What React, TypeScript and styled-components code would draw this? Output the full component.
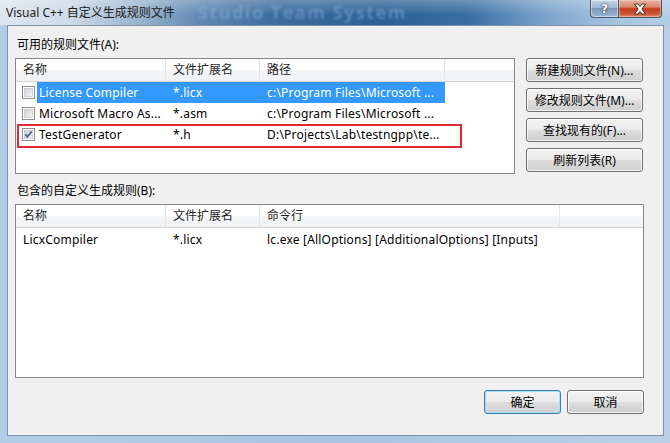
import React from "react";
import styled, { createGlobalStyle } from "styled-components";

const GlobalStyle = createGlobalStyle`
  html, body { margin: 0; padding: 0; }
  body {
    width: 670px;
    height: 443px;
    overflow: hidden;
    font-family: "Noto Sans", "Noto Sans CJK SC", sans-serif;
    font-size: 12px;
    color: #000;
  }
  * { box-sizing: border-box; }
`;

const Window = styled.div`
  width: 670px;
  height: 443px;
  display: flex;
  flex-direction: column;
  background: linear-gradient(90deg, #b4cde6 0%, #a9c5e2 50%, #b9d0e7 100%);
  overflow: hidden;
`;

const TitleBar = styled.div`
  position: relative;
  height: 25px;
  flex: none;
  display: flex;
  align-items: flex-start;
  background:
    linear-gradient(180deg, rgba(255, 255, 255, 0.25) 0%, rgba(255, 255, 255, 0) 60%),
    linear-gradient(90deg, #dde6ef 0%, #cfdbe7 10%, #9db7d0 20%, #5f88b2 30%, #3a6b9c 42%, #2c6196 58%, #3a6fa3 70%, #7ea6cc 82%, #a7c4e0 92%, #b3cde6 100%);
  overflow: hidden;
`;

const Watermark = styled.div`
  position: absolute;
  left: 198px;
  top: 2px;
  height: 21px;
  font-family: "Open Sans", "Noto Sans", sans-serif;
  font-weight: 700;
  font-size: 18px;
  line-height: 21px;
  letter-spacing: 1.5px;
  color: rgba(150, 190, 230, 0.4);
  filter: blur(0.8px);
  white-space: nowrap;
  pointer-events: none;
`;

const Title = styled.div`
  position: relative;
  padding-left: 6px;
  line-height: 25px;
  font-size: 12px;
  color: #1b1b1b;
  white-space: nowrap;
`;

const CaptionButtons = styled.div`
  position: relative;
  margin-left: auto;
  margin-right: 8px;
  display: flex;
`;

const HelpButton = styled.div`
  width: 28px;
  height: 18px;
  border: 1px solid #45566b;
  border-top: none;
  border-right: none;
  border-radius: 0 0 0 4px;
  background: linear-gradient(180deg, #c3d5e7 0%, #9fb8d2 45%, #7b98b8 50%, #9ab7d5 100%);
  box-shadow: inset 0 0 0 1px rgba(255, 255, 255, 0.45);
  display: flex;
  align-items: center;
  justify-content: center;
  font-family: "DejaVu Sans", sans-serif;
  font-weight: 700;
  font-size: 12px;
  line-height: 16px;
  color: #fff;
  text-shadow: 0 0 1px #24364f, 0 0 2px #24364f;
`;

const CloseButton = styled.div`
  width: 44px;
  height: 18px;
  border: 1px solid #45566b;
  border-top: none;
  border-radius: 0 0 4px 0;
  background: linear-gradient(180deg, #e9b2a2 0%, #dc8a73 40%, #c43c20 52%, #cf5335 80%, #e28d73 100%);
  box-shadow: inset 0 0 0 1px rgba(255, 230, 220, 0.4);
  display: flex;
  align-items: center;
  justify-content: center;
`;

const FrameBody = styled.div`
  flex: 1;
  padding: 0 7px 7px 7px;
  display: flex;
`;

const Client = styled.div`
  flex: 1;
  display: flex;
  flex-direction: column;
  background: #f0f0f0;
  border: 1px solid #7f92aa;
  padding: 11px 19px 0 7px;
`;

const SectionLabel = styled.div<{ $gapTop?: number }>`
  height: 16px;
  line-height: 16px;
  margin: ${(p) => p.$gapTop ?? 0}px 0 5px 2px;
  white-space: nowrap;
`;

const TopRow = styled.div`
  display: flex;
  gap: 11px;
  height: 116px;
`;

const ListBox = styled.div<{ $w: number; $h: number }>`
  position: relative;
  width: ${(p) => p.$w}px;
  height: ${(p) => p.$h}px;
  border: 1px solid #828790;
  background: #fff;
  overflow: hidden;
`;

const Header = styled.div`
  display: flex;
  height: 23px;
  border-bottom: 1px solid #d5d5d5;
  background: linear-gradient(180deg, #ffffff 0%, #ffffff 45%, #f3f4f6 55%, #f1f2f4 100%);
`;

const HeaderCell = styled.div<{ $w?: number }>`
  ${(p) => (p.$w ? `width: ${p.$w}px; flex: none;` : "flex: 1;")}
  height: 22px;
  line-height: 22px;
  padding-left: 7px;
  border-right: ${(p) => (p.$w ? "1px solid #e3e5e8" : "none")};
  color: #1e1e1e;
  white-space: nowrap;
`;

const Rows = styled.div<{ $pad: number }>`
  padding-top: ${(p) => p.$pad}px;
`;

const Row = styled.div`
  display: flex;
  height: 21px;
  align-items: center;
`;

const CheckCell = styled.div`
  width: 21px;
  flex: none;
  display: flex;
  align-items: center;
  padding-left: 6px;
`;

const RowBody = styled.div<{ $selected?: boolean }>`
  display: flex;
  height: 21px;
  align-items: center;
  background: ${(p) => (p.$selected ? "#3399ff" : "transparent")};
  color: ${(p) => (p.$selected ? "#fff" : "#000")};
`;

const Cell = styled.div<{ $w: number; $pad: number }>`
  width: ${(p) => p.$w}px;
  flex: none;
  padding-left: ${(p) => p.$pad}px;
  letter-spacing: 0.2px;
  white-space: nowrap;
  overflow: hidden;
`;

const Highlight = styled.div`
  position: absolute;
  left: 1px;
  top: 65px;
  width: 445px;
  height: 24px;
  border: 2px solid #e2282d;
  pointer-events: none;
`;

const ButtonColumn = styled.div`
  display: flex;
  flex-direction: column;
  gap: 6px;
`;

const Button = styled.button<{ $w: number; $default?: boolean }>`
  width: ${(p) => p.$w}px;
  height: 24px;
  padding: 0;
  margin: 0;
  font-family: "Noto Sans", "Noto Sans CJK SC", sans-serif;
  font-size: 12px;
  color: #000;
  border: 1px solid ${(p) => (p.$default ? "#3c7fb1" : "#707070")};
  border-radius: 3px;
  background: linear-gradient(180deg, #f2f2f2 0%, #ebebeb 48%, #dddddd 52%, #cfcfcf 100%);
  box-shadow: inset 0 0 0 1px ${(p) => (p.$default ? "#a8dcf5" : "rgba(255,255,255,0.75)")};
  white-space: nowrap;
`;

const Footer = styled.div`
  display: flex;
  justify-content: flex-end;
  gap: 6px;
  margin-top: 12px;
`;

const CheckBox: React.FC<{ checked?: boolean }> = ({ checked }) => (
  <svg width="13" height="13" viewBox="0 0 13 13">
    <defs>
      <linearGradient id="cbg" x1="0" y1="0" x2="1" y2="1">
        <stop offset="0" stopColor="#cbcfd5" />
        <stop offset="1" stopColor="#f6f6f6" />
      </linearGradient>
    </defs>
    <rect x="0.5" y="0.5" width="12" height="12" fill="#fff" stroke="#8e8f8f" />
    <rect x="2.5" y="2.5" width="8" height="8" fill="url(#cbg)" stroke="#b9bcc2" strokeWidth="0.6" />
    {checked && (
      <path d="M3.3 6.4 L5.4 8.8 L9.6 3.4" fill="none" stroke="#4a5f8f" strokeWidth="1.7" />
    )}
  </svg>
);

const CloseGlyph = () => (
  <svg width="14" height="12" viewBox="0 0 14 12">
    <path
      d="M1.5 1 H5 L7 3.6 L9 1 H12.5 L8.9 6 L12.5 11 H9 L7 8.4 L5 11 H1.5 L5.1 6 Z"
      fill="#ffffff"
      stroke="#3b2320"
      strokeWidth="0.9"
      strokeLinejoin="round"
    />
  </svg>
);

type RuleRow = { name: string; ext: string; path: string; checked?: boolean; selected?: boolean };

const ruleFiles: RuleRow[] = [
  { name: "License Compiler", ext: "*.licx", path: "c:\\Program Files\\Microsoft ...", selected: true },
  { name: "Microsoft Macro As...", ext: "*.asm", path: "c:\\Program Files\\Microsoft ..." },
  { name: "TestGenerator", ext: "*.h", path: "D:\\Projects\\Lab\\testngpp\\te...", checked: true },
];

export default function App() {
  return (
    <>
      <GlobalStyle />
      <Window>
        <TitleBar>
          <Watermark>Studio Team System</Watermark>
          <Title>Visual C++ 自定义生成规则文件</Title>
          <CaptionButtons>
            <HelpButton>?</HelpButton>
            <CloseButton>
              <CloseGlyph />
            </CloseButton>
          </CaptionButtons>
        </TitleBar>
        <FrameBody>
          <Client>
            <SectionLabel>可用的规则文件(A):</SectionLabel>
            <TopRow>
              <ListBox $w={500} $h={116}>
                <Header>
                  <HeaderCell $w={150}>名称</HeaderCell>
                  <HeaderCell $w={94}>文件扩展名</HeaderCell>
                  <HeaderCell $w={185}>路径</HeaderCell>
                  <HeaderCell />
                </Header>
                <Rows $pad={0}>
                  {ruleFiles.map((r) => (
                    <Row key={r.name}>
                      <CheckCell>
                        <CheckBox checked={r.checked} />
                      </CheckCell>
                      <RowBody $selected={r.selected}>
                        <Cell $w={129} $pad={2}>{r.name}</Cell>
                        <Cell $w={94} $pad={7}>{r.ext}</Cell>
                        <Cell $w={185} $pad={7}>{r.path}</Cell>
                      </RowBody>
                    </Row>
                  ))}
                </Rows>
                <Highlight />
              </ListBox>
              <ButtonColumn>
                <Button $w={117}>新建规则文件(N)...</Button>
                <Button $w={117}>修改规则文件(M)...</Button>
                <Button $w={117}>查找现有的(F)...</Button>
                <Button $w={117}>刷新列表(R)</Button>
              </ButtonColumn>
            </TopRow>
            <SectionLabel $gapTop={9}>包含的自定义生成规则(B):</SectionLabel>
            <ListBox $w={629} $h={174}>
              <Header>
                <HeaderCell $w={150}>名称</HeaderCell>
                <HeaderCell $w={94}>文件扩展名</HeaderCell>
                <HeaderCell $w={300}>命令行</HeaderCell>
                <HeaderCell />
              </Header>
              <Rows $pad={1}>
                <Row>
                  <Cell $w={150} $pad={7}>LicxCompiler</Cell>
                  <Cell $w={94} $pad={7}>*.licx</Cell>
                  <Cell $w={300} $pad={7}>lc.exe [AllOptions] [AdditionalOptions] [Inputs]</Cell>
                </Row>
              </Rows>
            </ListBox>
            <Footer>
              <Button $w={77} $default>确定</Button>
              <Button $w={77}>取消</Button>
            </Footer>
          </Client>
        </FrameBody>
      </Window>
    </>
  );
}
